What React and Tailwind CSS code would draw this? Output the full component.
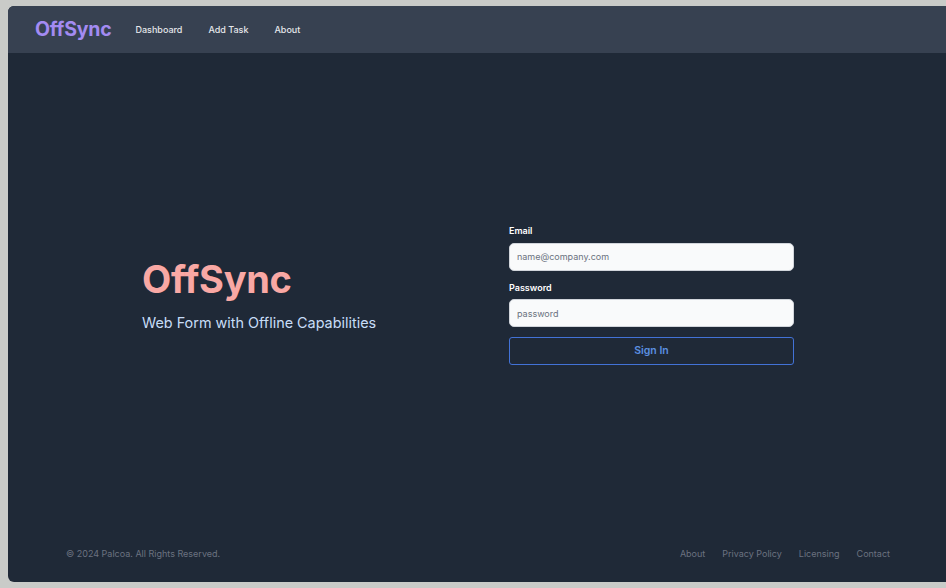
import React from "react";

const font = { fontFamily: "Inter, 'Noto Sans', sans-serif" };

const navLinks = ["Dashboard", "Add Task", "About"];
const footerLinks = ["About", "Privacy Policy", "Licensing", "Contact"];

const Nav = () => (
  <header className="h-[47px] shrink-0 bg-[#374151] flex items-center pl-[27px]">
    <span className="text-[19.5px] font-bold text-[#a38bf2] tracking-[-0.2px]">OffSync</span>
    <nav className="flex items-center gap-[26px] ml-[24px] text-[9px] text-[#e5e7eb]">
      {navLinks.map((l) => (
        <a key={l} href="#" className="font-medium">{l}</a>
      ))}
    </nav>
  </header>
);

const Field = ({ label, placeholder, type }) => (
  <div className="flex flex-col">
    <label className="text-[9px] font-semibold text-white mb-[5px]">{label}</label>
    <input
      type={type}
      placeholder={placeholder}
      className="h-[28px] rounded-[5px] bg-[#f9fafb] border border-[#d1d5db] px-[7px] text-[9px] text-gray-900 placeholder:text-[#6b7280] outline-none"
    />
  </div>
);

const LoginForm = () => (
  <form className="w-[285px] flex flex-col gap-[10px]" onSubmit={(e) => e.preventDefault()}>
    <Field label="Email" placeholder="name@company.com" type="email" />
    <Field label="Password" placeholder="password" type="password" />
    <button
      type="submit"
      className="h-[28px] rounded-[3px] border border-[#4272d6] text-[10.5px] font-semibold text-[#5b8fe0]"
    >
      Sign In
    </button>
  </form>
);

const Footer = () => (
  <footer className="h-[58px] shrink-0 flex items-center justify-between pl-[58px] pr-[56px] pt-[2px] text-[9px] text-[#6b7280]">
    <span>© 2024 Palcoa. All Rights Reserved.</span>
    <div className="flex items-center gap-[17px]">
      {footerLinks.map((l) => (
        <a key={l} href="#">{l}</a>
      ))}
    </div>
  </footer>
);

export default function App() {
  return (
    <div className="h-[588px] w-[946px] bg-[#c9cbc8] pl-[8px] pt-[6px] pb-[6px] overflow-hidden" style={font}>
      <div className="h-full flex flex-col bg-[#1f2937] rounded-l-[6px] overflow-hidden">
        <Nav />
        <main className="flex-1 flex items-center pl-[134px] pt-[12px]">
          <div className="w-[367px] flex flex-col pt-[4px]">
            <h1 className="text-[38px] font-bold leading-none text-[#f9a8a4] tracking-[-0.3px]">OffSync</h1>
            <p className="mt-[14px] text-[14.4px] text-[#c7ddf7]">Web Form with Offline Capabilities</p>
          </div>
          <LoginForm />
        </main>
        <Footer />
      </div>
    </div>
  );
}
